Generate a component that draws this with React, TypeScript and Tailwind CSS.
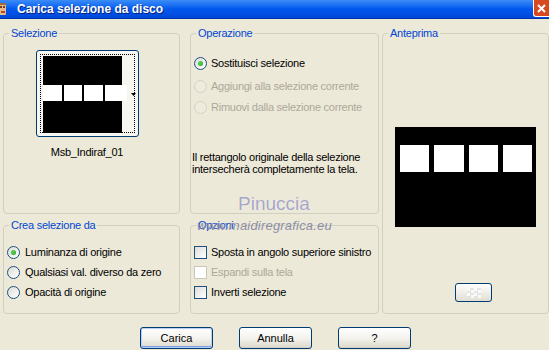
import React from 'react';

const FONT = "font-['Liberation_Sans',Arial,sans-serif]";

const Radio: React.FC<{ checked?: boolean; disabled?: boolean }> = ({ checked, disabled }) => (
  <span
    className={`relative inline-block shrink-0 w-[13px] h-[13px] rounded-full border ${
      disabled
        ? 'border-[#D5D2C4] bg-[#EEEBDE]'
        : 'border-[#1C5180] bg-gradient-to-br from-[#DCDCD6] to-white'
    }`}
  >
    {checked && (
      <span className="absolute left-[3px] top-[3px] w-[5px] h-[5px] rounded-full bg-[radial-gradient(circle_at_40%_40%,#5CD65C,#21A121)]" />
    )}
  </span>
);

const Check: React.FC<{ disabled?: boolean }> = ({ disabled }) => (
  <span
    className={`inline-block shrink-0 w-[13px] h-[13px] border ${
      disabled ? 'border-[#CAC8BB] bg-white' : 'border-[#1C5180] bg-gradient-to-br from-[#DCDCD7] to-white'
    }`}
  />
);

const Group: React.FC<{ title: string; className?: string; children?: React.ReactNode }> = ({
  title,
  className,
  children,
}) => (
  <fieldset className={`border border-[#D0D0BF] rounded-[4px] min-w-0 ${className ?? ''}`}>
    <legend className="ml-[5px] px-[2px] text-[11px] leading-[13px] text-[#0046D5]">{title}</legend>
    {children}
  </fieldset>
);

const XpButton: React.FC<{ label: string; primary?: boolean }> = ({ label, primary }) => (
  <button
    type="button"
    className={`w-[73px] h-[22px] rounded-[3px] border border-[#003C74] bg-gradient-to-b from-white via-[#F4F3EE] to-[#DCD8CB] text-[11px] text-black ${
      primary ? 'shadow-[inset_0_0_0_1px_#B9CFF5,inset_0_-1px_0_1px_#7B9EE2]' : 'shadow-[inset_0_-1px_0_0_#D6D0C5]'
    }`}
  >
    {label}
  </button>
);

export default function App() {
  return (
    <div className={`relative w-[549px] h-[350px] overflow-hidden bg-[#ECE9D8] text-black ${FONT}`}>
      {/* title bar */}
      <div className="h-[19px] flex items-stretch bg-gradient-to-b from-[#3B8CF7] via-[#0058EE] to-[#0048DA] border-b border-[#0033A8]">
        <svg width="10" height="16" viewBox="0 0 10 16" className="ml-[-2px] mt-[2px]">
          <rect x="1" y="2" width="7" height="11" rx="1" fill="#E8B98A" />
          <rect x="2" y="4" width="2" height="2" fill="#7A3C1C" />
          <rect x="5" y="4" width="2" height="2" fill="#7A3C1C" />
          <rect x="3" y="9" width="4" height="2" fill="#B44A2A" />
          <rect x="1" y="1" width="7" height="2" fill="#9E6B3E" />
        </svg>
        <span className="ml-[9px] self-center text-[12px] font-bold text-white [text-shadow:1px_1px_0_#0A1E7A]">
          Carica selezione da disco
        </span>
        <div className="ml-auto w-[16px] h-[17px] shrink-0 rounded-bl-[3px] border-l border-b border-white bg-[#D8491F] flex items-center justify-center">
          <svg width="9" height="9" viewBox="0 0 9 9">
            <path d="M1 1 L8 8 M8 1 L1 8" stroke="white" strokeWidth="2" />
          </svg>
        </div>
      </div>

      {/* groups */}
      <div className="flex pl-[3px] pt-[8px] tracking-[-0.25px]">
        <div className="flex flex-col gap-[5px] w-[177px]">
          <Group title="Selezione" className="h-[187px]">
            <div className="ml-[32px] mt-[10px] w-[103px] flex flex-col items-center">
              <div className="relative w-[103px] h-[87px] rounded-[3px] border border-[#003C74] bg-[#F6F5F0] p-[3px]">
                <div className="w-full h-full border border-dotted border-black flex pl-[2px] pt-[1px]">
                  <div className="w-[79px] h-[77px] bg-black flex items-center">
                    <div className="flex gap-[2px] w-[84px] h-[16px] mt-[-4px] shrink-0">
                      <div className="w-[19px] h-full bg-white" />
                      <div className="w-[19px] h-full bg-white" />
                      <div className="w-[19px] h-full bg-white" />
                      <div className="w-[23px] h-full bg-white" />
                    </div>
                  </div>
                </div>
                <svg width="5" height="3" viewBox="0 0 5 3" className="absolute left-[94px] top-[42px]">
                  <path d="M0 0 H5 L2.5 3 Z" fill="black" />
                </svg>
              </div>
              <div className="mt-[9px] text-[11px] leading-[13px] ml-[-1px]">Msb_Indiraf_01</div>
            </div>
          </Group>
          <Group title="Crea selezione da" className="h-[95px]">
            <div className="mt-[14px] pl-[3px] flex flex-col gap-[7px] text-[11px] leading-[13px] whitespace-nowrap">
              <div className="flex items-center gap-[5px]">
                <Radio checked />
                <span>Luminanza di origine</span>
              </div>
              <div className="flex items-center gap-[5px]">
                <Radio />
                <span>Qualsiasi val. diverso da zero</span>
              </div>
              <div className="flex items-center gap-[5px]">
                <Radio />
                <span>Opacità di origine</span>
              </div>
            </div>
          </Group>
        </div>

        <div className="flex flex-col gap-[5px] w-[189px] ml-[10px]">
          <Group title="Operazione" className="h-[187px]">
            <div className="mt-[17px] pl-[3px] flex flex-col text-[11px] leading-[13px] whitespace-nowrap">
              <div className="flex items-center gap-[4px]">
                <Radio checked />
                <span>Sostituisci selezione</span>
              </div>
              <div className="flex items-center gap-[4px] mt-[10px] text-[#ACA899]">
                <Radio disabled />
                <span>Aggiungi alla selezione corrente</span>
              </div>
              <div className="flex items-center gap-[4px] mt-[8px] text-[#ACA899]">
                <Radio disabled />
                <span>Rimuovi dalla selezione corrente</span>
              </div>
            </div>
            <p className="mt-[37px] pl-[1px] text-[11px] leading-[12px] whitespace-nowrap">
              Il rettangolo originale della selezione
              <br />
              intersecherà completamente la tela.
            </p>
          </Group>
          <Group title="Opzioni" className="h-[95px]">
            <div className="mt-[14px] pl-[3px] flex flex-col gap-[7px] text-[11px] leading-[13px] whitespace-nowrap">
              <div className="flex items-center gap-[4px]">
                <Check />
                <span>Sposta in angolo superiore sinistro</span>
              </div>
              <div className="flex items-center gap-[4px] text-[#ACA899]">
                <Check disabled />
                <span>Espandi sulla tela</span>
              </div>
              <div className="flex items-center gap-[4px]">
                <Check />
                <span>Inverti selezione</span>
              </div>
            </div>
          </Group>
        </div>

        <Group title="Anteprima" className="w-[167px] h-[287px] ml-[3px]">
          <div className="ml-[12px] mt-[87px] w-[141px] h-[100px] bg-black pt-[18px] pl-[5px] flex gap-[5px] items-start">
            <div className="w-[29px] h-[27px] bg-white" />
            <div className="w-[30px] h-[27px] bg-white" />
            <div className="w-[29px] h-[27px] bg-white" />
            <div className="w-[29px] h-[27px] bg-white" />
          </div>
          <div className="ml-[72px] mt-[56px] w-[37px] h-[19px] rounded-[3px] border border-[#003C74] bg-gradient-to-b from-white to-[#E2DED2] flex items-center justify-center">
            <div className="w-[14px] h-[10px] bg-[conic-gradient(#E4E4E4_25%,#FAFAFA_0_50%,#E4E4E4_0_75%,#FAFAFA_0)] bg-[length:7px_5px]" />
          </div>
        </Group>
      </div>

      {/* buttons */}
      <div className="flex gap-[26px] pl-[140px] mt-[13px]">
        <XpButton label="Carica" primary />
        <XpButton label="Annulla" />
        <XpButton label="?" />
      </div>

      {/* watermark */}
      <div className="absolute left-[238px] top-[193px] text-[19px] leading-[22px] text-[#A6A6C6] [text-shadow:0_0_1px_#fff]">
        Pinuccia
      </div>
      <div className="absolute left-[197px] top-[218px] text-[13px] leading-[15px] italic text-[#8E8EA8] tracking-[0.2px]">
        www.maidiregrafica.eu
      </div>
    </div>
  );
}
